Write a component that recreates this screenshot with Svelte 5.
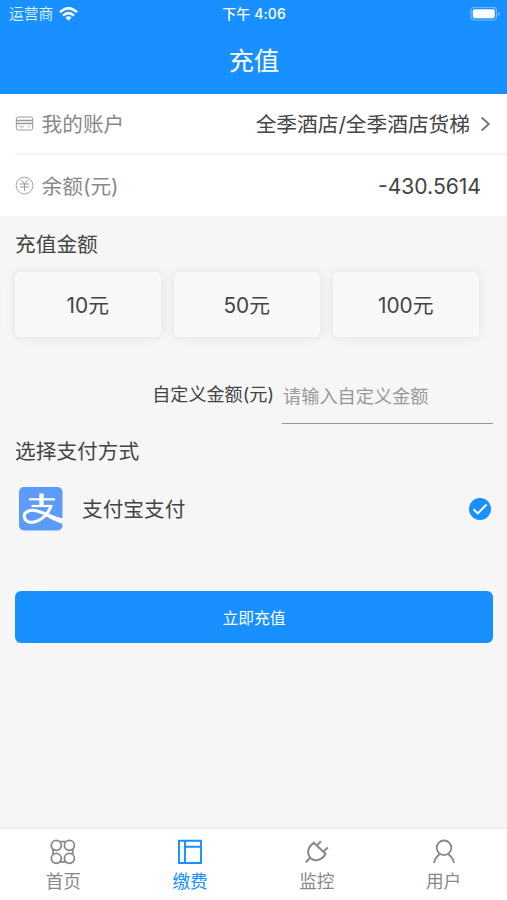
<script lang="ts">
	const amounts: number[] = [10, 50, 100];
	const tabs: { id: string; label: string }[] = [
		{ id: 'home', label: '首页' },
		{ id: 'pay', label: '缴费' },
		{ id: 'monitor', label: '监控' },
		{ id: 'user', label: '用户' }
	];

	let active: string = $state('pay');
	let selected: number = $state(0);
	let custom: string = $state('');
</script>

<div class="page">
	<header>
		<div class="status">
			<div class="carrier">
				<span>运营商</span>
				<svg width="19" height="14" viewBox="0 0 19 14">
					<g fill="none" stroke="#fff" stroke-width="2.5">
						<path d="M1 5.2Q9.5 -2.6 18 5.2" />
						<path d="M4.1 8.6Q9.5 3.6 14.9 8.6" />
					</g>
					<path d="M6.5 10.6Q9.5 8 12.5 10.6L9.5 13.8Z" fill="#fff" />
				</svg>
			</div>
			<div class="time">下午 4:06</div>
			<div class="battery">
				<svg width="31" height="15" viewBox="0 0 31 15">
					<rect x="1" y="0.5" width="25.5" height="12.5" rx="3.5" fill="none" stroke="#74b9fd" stroke-width="1.2" />
					<rect x="2.8" y="2.3" width="22" height="9" rx="2" fill="#fff" />
					<path d="M28 4.7Q30 5.5 30 6.8Q30 8.1 28 8.9Z" fill="#74b9fd" />
				</svg>
			</div>
		</div>
		<h1>充值</h1>
	</header>

	<section class="account">
		<div class="row">
			<svg width="19" height="19" viewBox="0 0 19 19" fill="none" stroke="#999">
				<rect x="1.3" y="3" width="16.4" height="13" rx="2" />
				<path d="M1.3 6.5H17.7M1.3 9.5H17.7" stroke-width="1.3" />
				<path d="M4 12.8H9M13 12.8H15" stroke-width="0.8" />
			</svg>
			<span class="name">我的账户</span>
			<span class="value">全季酒店/全季酒店货梯</span>
			<svg class="arrow" width="11" height="16" viewBox="0 0 11 16" fill="none" stroke="#777" stroke-width="1.9">
				<path d="M1.6 1.5L8.8 8L1.6 14.5" />
			</svg>
		</div>
		<div class="row">
			<svg width="19" height="19" viewBox="0 0 19 19" fill="none" stroke="#999">
				<circle cx="9.5" cy="9.5" r="8.4" stroke-width="0.9" />
				<path d="M6.2 4.3L9.5 7.8L12.8 4.3M5 8H14M5 11H14M9.5 7.8V15" />
			</svg>
			<span class="name">余额(元)</span>
			<span class="value balance">-430.5614</span>
		</div>
	</section>

	<main>
		<h2>充值金额</h2>
		<div class="amounts">
			{#each amounts as amount}
				<button class="amount" onclick={() => (selected = amount)}>{amount}元</button>
			{/each}
		</div>

		<div class="custom">
			<label for="custom">自定义金额(元)</label>
			<input id="custom" placeholder="请输入自定义金额" bind:value={custom} />
		</div>

		<h2 class="method">选择支付方式</h2>
		<div class="pay">
			<svg width="44" height="44" viewBox="0 0 44 44">
				<rect width="43.5" height="43.5" rx="5" fill="#5c9cf8" />
				<g fill="none" stroke="#fff">
					<path d="M10 12.3H36" stroke-width="2.2" />
					<path d="M22.5 6.5V18.5" stroke-width="4.4" />
					<path d="M12.5 19H31.5" stroke-width="2.2" />
					<path d="M32.5 18C30 25 24.5 31.5 18 34.2C11 37 5.2 34 5.2 29.3C5.2 24.5 11 22.5 17 23.7C23 24.8 31 29.5 43.5 33.2" stroke-width="3" />
				</g>
				<path d="M27 26.2Q34 30 43.5 31.3V37Q34 33.8 25.5 28.5Z" fill="#fff" />
			</svg>
			<span>支付宝支付</span>
			<svg class="check" width="22" height="22" viewBox="0 0 22 22">
				<circle cx="11" cy="11" r="11" fill="#1890ff" />
				<path d="M4.5 11.2L8.8 15.4L17.6 6.5" fill="none" stroke="#fff" stroke-width="2" />
			</svg>
		</div>

		<button class="submit">立即充值</button>
	</main>

	<nav>
		{#each tabs as tab}
			<button class="tab" class:active={active === tab.id} onclick={() => (active = tab.id)}>
				<svg width="26" height="26" viewBox="0 0 26 26" fill="none" stroke="currentColor" stroke-width="1.8">
					{#if tab.id === 'home'}
						<circle cx="6.3" cy="6.3" r="5" />
						<circle cx="19.4" cy="6.3" r="5" />
						<circle cx="6.3" cy="19.3" r="5" />
						<circle cx="19.4" cy="19.3" r="5" />
						<path d="M9.8 2.7H16M9.8 22.9H16M3 10V15.6M22.7 10V15.6" />
					{:else if tab.id === 'pay'}
						<path d="M2 1.8H24V24H2ZM8 1.8V24M8 7.7H24" stroke-width="1.9" />
					{:else if tab.id === 'monitor'}
						<path d="M9 3L22.3 15.6M21.5 15C18.5 20.8 11 23 6.8 19.2C2.4 15 3.8 7.2 10 4M5.8 19.2L1.8 23.2M13 6.4L17 2.2M19.6 12.2L24 8.4" stroke-width="2" />
					{:else}
						<circle cx="13" cy="8.8" r="7.3" />
						<path d="M3 24Q4.2 18.5 8.6 15.3M17.4 15.3Q21.8 18.5 23 24" />
					{/if}
				</svg>
				<span>{tab.label}</span>
			</button>
		{/each}
	</nav>
</div>

<style>
	:global(body) {
		margin: 0;
		background-color: #f6f6f6;
	}

	.page {
		display: flex;
		flex-direction: column;
		height: 900px;
		font-family: Inter, 'Noto Sans CJK SC', sans-serif;
		font-size: 20.7px;
		color: #444;
		background-color: #f6f6f6;
	}

	svg {
		display: block;
		flex: none;
	}

	button {
		border: none;
		margin: 0;
		padding: 0;
		font-family: inherit;
	}

	header {
		height: 94px;
		background-color: #1890ff;
		color: #fff;
	}

	.status {
		display: grid;
		grid-template-columns: 1fr auto 1fr;
		align-items: center;
		height: 27px;
		padding: 0 6px 0 9px;
		font-size: 14.8px;
		line-height: 28px;
	}

	.carrier {
		display: flex;
		align-items: center;
		gap: 6px;
		color: #d8edff;
	}

	.time {
		margin-right: 2px;
		font-size: 14px;
		font-weight: 500;
		letter-spacing: 0.1px;
	}

	.battery {
		display: flex;
		justify-content: flex-end;
	}

	h1 {
		margin: 0;
		padding-left: 1px;
		font-size: 25.3px;
		font-weight: 400;
		line-height: 68px;
		text-align: center;
	}

	.account {
		background-color: #fff;
		height: 122px;
	}

	.row {
		display: flex;
		align-items: center;
		box-sizing: border-box;
		height: 61px;
		margin-left: 15px;
		padding-right: 16px;
	}

	.row:first-child {
		border-bottom: 2px solid #f3f3f3;
	}

	.name {
		margin: 0 0 1px 7.5px;
		color: #888;
	}

	.value {
		margin: 0 0 1px auto;
	}

	.balance {
		margin: 2px 10px 0 auto;
		font-size: 21.1px;
	}

	.arrow {
		margin-left: 10px;
	}

	main {
		flex: 1;
		padding: 0 14px 0 15px;
	}

	h2 {
		margin: 0;
		font-size: 20.7px;
		font-weight: 400;
		line-height: 57px;
	}

	.amounts {
		display: flex;
		gap: 13.5px;
		margin-top: -1px;
	}

	.amount {
		width: 145.5px;
		height: 65px;
		padding-bottom: 2px;
		border-radius: 5px;
		background-color: #f8f8f8;
		box-shadow: 0 0 12px rgba(0, 0, 0, 0.09);
		font-size: 20.8px;
		color: #444;
	}

	.custom {
		display: flex;
		justify-content: flex-end;
		margin-top: 31px;
	}

	label {
		margin-right: 8px;
		font-size: 18.1px;
		line-height: 52px;
	}

	input {
		box-sizing: border-box;
		width: 211px;
		height: 56px;
		padding: 0 0 0 1px;
		border: none;
		border-bottom: 1.5px solid #999;
		border-radius: 0;
		outline: none;
		background: none;
		font-family: inherit;
		font-size: 18.2px;
		color: #444;
	}

	input::placeholder {
		color: #999;
	}

	.method {
		line-height: 55px;
	}

	.pay {
		display: flex;
		align-items: center;
		height: 60px;
		padding: 0 2px 0 4.4px;
	}

	.pay span {
		margin: 0 0 2px 18.6px;
	}

	.check {
		margin-left: auto;
	}

	.submit {
		display: block;
		width: 100%;
		height: 52px;
		margin-top: 52px;
		border-radius: 6px;
		background-color: #1890ff;
		color: #fff;
		font-size: 15.8px;
	}

	nav {
		display: flex;
		box-sizing: border-box;
		height: 73px;
		border-top: 2px solid #eee;
		background-color: #fff;
	}

	.tab {
		display: flex;
		flex: 1;
		flex-direction: column;
		align-items: center;
		padding-top: 10px;
		background: none;
		color: #888;
		font-size: 17.7px;
		line-height: 34px;
	}

	.active {
		color: #1890ff;
	}
</style>
